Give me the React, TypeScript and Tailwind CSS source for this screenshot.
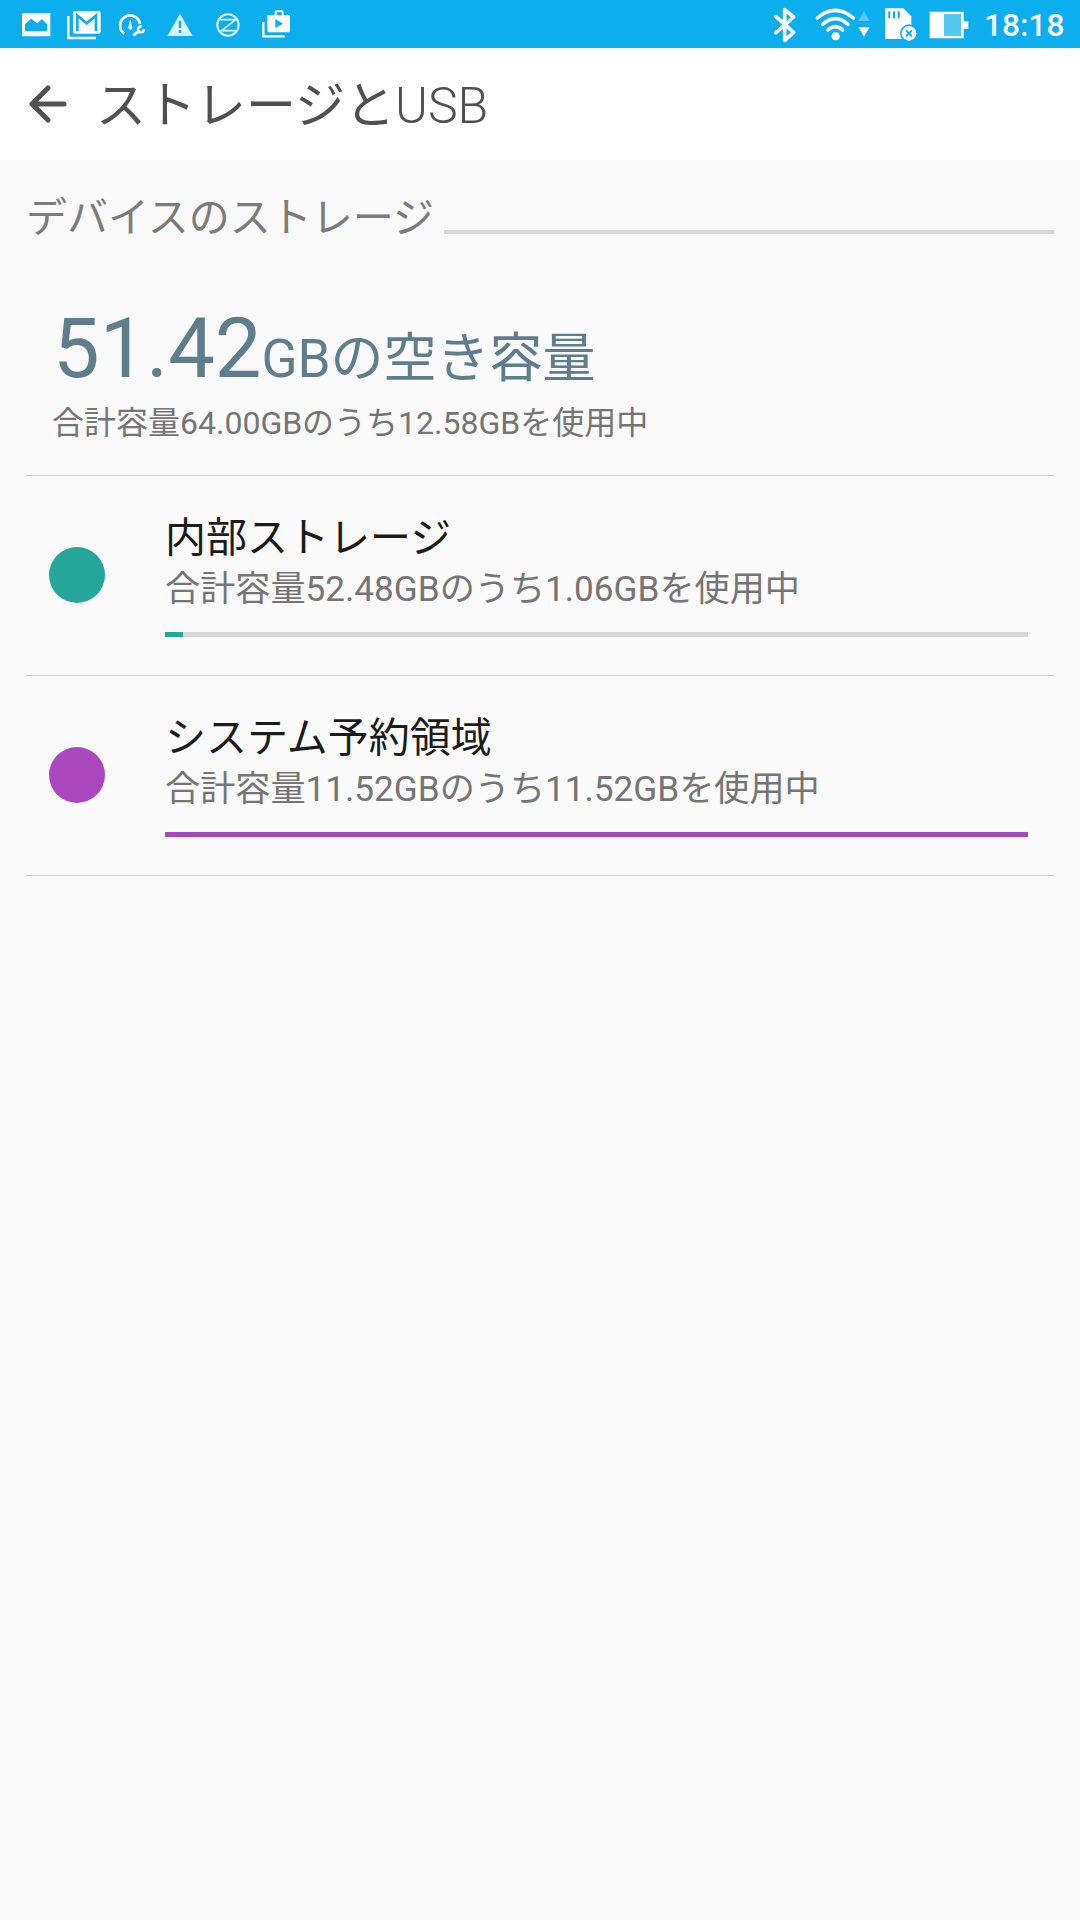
import React from "react";

const textFont = "font-['Roboto','Noto_Sans_CJK_JP',sans-serif]";

function NotificationIcons() {
  return (
    <svg className="h-12 w-[300px] shrink-0" viewBox="0 0 900 144" fill="none">
      <path fill="#fff" fillRule="evenodd" d="M66 39H151V109H66ZM75 94H141V73L126 57L112 70L93 56L75 73Z" />
      <path d="M205 48V114H288" stroke="#fff" strokeWidth="7" />
      <rect x="219" y="33" width="83" height="68" rx="6" fill="#fff" />
      <path d="M232 94V47L260 70L288 47V94" stroke="#0caeee" strokeWidth="8" />
      <path d="M373 101A30 30 0 1 1 420 72" stroke="#fff" strokeWidth="8" />
      <path d="M391 58L397 82Q397 89 391 90Q385 89 385 82Z" fill="#fff" />
      <path d="M400 106L419 91" stroke="#fff" strokeWidth="9" />
      <path d="M425 79A9 9 0 1 0 432 88" stroke="#fff" strokeWidth="8" />
      <path d="M540 41L578 108H502Z" fill="#d8f3fd" />
      <path d="M540 62V84M540 90V99" stroke="#25acd8" strokeWidth="8" />
      <circle cx="684" cy="75" r="32" stroke="#e6f8ff" strokeWidth="6" />
      <path d="M661 59H707L665 92H708" stroke="#e6f8ff" strokeWidth="5" />
      <path d="M790 66V109H854" stroke="#fff" strokeWidth="7" />
      <path d="M827 45V38Q827 33 832 33H843Q848 33 848 38V45" stroke="#fff" strokeWidth="6" />
      <path fill="#fff" fillRule="evenodd" d="M802 45H870V92Q870 97 865 97H807Q802 97 802 92ZM826 57V84L849 71Z" />
    </svg>
  );
}

function SystemIcons() {
  return (
    <svg className="h-12 w-[210px] shrink-0" viewBox="0 0 630 144" fill="none">
      <path d="M48 50L101 97L74 121V29L101 51L48 98" stroke="#fff" strokeWidth="11" strokeLinejoin="round" strokeLinecap="round" />
      <path d="M172 54Q226 8 280 54M188 73Q226 39 264 73M204 90Q226 70 248 90" stroke="#fff" strokeWidth="10.5" strokeLinecap="round" />
      <circle cx="227" cy="109" r="12" fill="#fff" />
      <path d="M312 33L329 63H295Z" fill="#55c7f3" />
      <path d="M295 81H329L312 110Z" fill="#fff" />
      <path d="M375 25H430L454 49V117H375Z" fill="#fff" />
      <path d="M388 34V55M402 34V55M416 34V55" stroke="#0caeee" strokeWidth="6" />
      <circle cx="447" cy="100" r="27" fill="#0caeee" />
      <circle cx="447" cy="100" r="22" fill="#fff" />
      <path d="M438 91L456 109M456 91L438 109" stroke="#0caeee" strokeWidth="6" />
      <path d="M509 35H611V63H625V87H611V115H509Z" fill="#fff" />
      <path d="M552 42H603V108H552Z" fill="#55c7f3" />
    </svg>
  );
}

interface VolumeProps {
  name: string;
  summary: string;
  dot: string;
  bar: string;
  used: number;
}

function Volume({ name, summary, dot, bar, used }: VolumeProps) {
  return (
    <li className="flex h-50 border-b border-[#cecece] pl-[23px] pr-[26px]">
      <div className={`mt-[71px] h-14 w-14 shrink-0 rounded-full ${dot}`} />
      <div className="ml-[60px] flex-1">
        <h2 className="mt-[35px] h-[54px] whitespace-nowrap text-[41px] leading-[54px] text-[#1b1b1b]">{name}</h2>
        <p className="h-[48px] whitespace-nowrap text-[35.15px] leading-[48px] text-[#757575]">{summary}</p>
        <div className="mt-[19px] h-[5px] bg-[#d7d7d7]">
          <div className={`h-full ${bar}`} style={{ width: `${used}%` }} />
        </div>
      </div>
    </li>
  );
}

export default function App() {
  return (
    <div className={`flex h-[1920px] w-[1080px] flex-col overflow-hidden bg-[#fafafa] ${textFont}`}>
      <div className="flex h-12 items-center bg-[#0caeee]">
        <NotificationIcons />
        <div className="flex-1" />
        <SystemIcons />
        <span className="ml-[14px] w-[96px] whitespace-nowrap pt-[4px] text-[31.7px] font-medium leading-[48px] text-white">18:18</span>
      </div>

      <header className="flex h-28 items-center bg-white">
        <svg className="ml-[27px] h-10 w-10 shrink-0" viewBox="0 0 40 40" fill="none" stroke="#505050" strokeWidth="5" strokeLinecap="round" strokeLinejoin="round">
          <path d="M37 20H5M21 4L5 20L21 36" />
        </svg>
        <h1 className="ml-[29px] whitespace-nowrap pt-[3px] text-[50px] leading-[72px] text-[#505050]">
          ストレージと<span className="font-light">USB</span>
        </h1>
      </header>

      <main className="px-[26px]">
        <div className="flex h-[118px]">
          <h2 className="mt-[30px] w-[418px] whitespace-nowrap text-[41px] leading-[56px] text-[#7b7b7b]">デバイスのストレージ</h2>
          <div className="mt-[70px] h-1 flex-1 bg-[#d7d7d7]" />
        </div>

        <section className="h-[198px] border-b border-[#cecece] pl-[26px] pt-[21px]">
          <p className="ml-px h-[100px] whitespace-nowrap text-[53px] leading-[100px] text-[#607d8b]">
            <span className="text-[83px]">51.42</span>GBの空き容量
          </p>
          <p className="h-[48px] whitespace-nowrap text-[32px] leading-[48px] text-[#757575]">合計容量64.00GBのうち12.58GBを使用中</p>
        </section>

        <ul>
          <Volume name="内部ストレージ" summary="合計容量52.48GBのうち1.06GBを使用中" dot="bg-[#26a69a]" bar="bg-[#26a69a]" used={2.08} />
          <Volume name="システム予約領域" summary="合計容量11.52GBのうち11.52GBを使用中" dot="bg-[#ab47bc]" bar="bg-[#ab47bc]" used={100} />
        </ul>
      </main>
    </div>
  );
}
